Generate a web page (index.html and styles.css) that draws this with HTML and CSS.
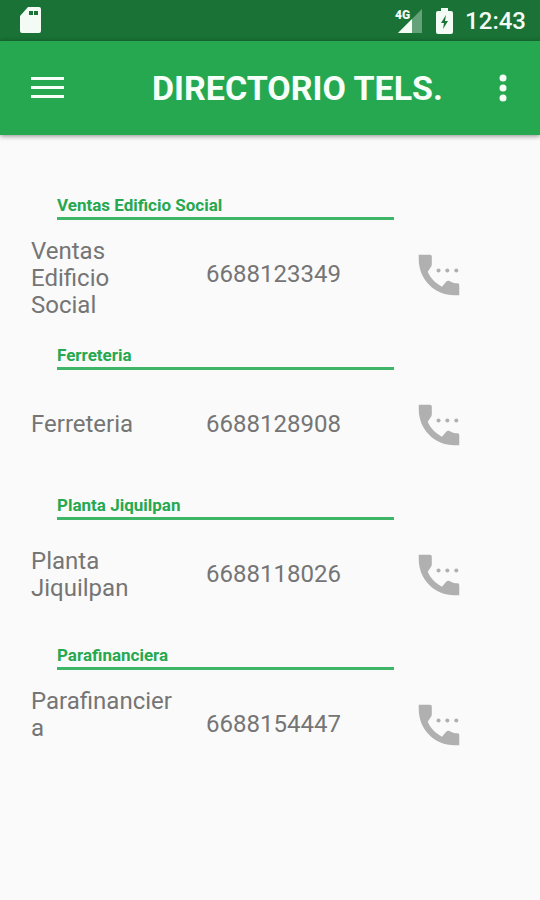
FILE: index.html
```html
<!DOCTYPE html>
<html lang="es">
<head>
<meta charset="utf-8">
<meta name="viewport" content="width=device-width, initial-scale=1">
<title>Directorio Tels.</title>
<link rel="stylesheet" href="styles.css">
</head>
<body>
<svg class="sprite" aria-hidden="true">
  <symbol id="phone" viewBox="0 0 24 24">
    <path d="M3 3h5q.8 0 .8.8v3.400q0 .8-.5 1.400L7 10.600c1.300 2.900 3.500 5.200 6.300 6.600l1.800-2.100q.5-.6 1.300-.5l1.600.7q1.200.4 2.300.4.700 0 .7.700V21h-2C10 21 3 14 3 5z"/>
    <circle cx="11.800" cy="10" r=".9"/><circle cx="15.700" cy="10" r=".9"/><circle cx="19.700" cy="10" r=".9"/>
  </symbol>
</svg>
<div class="status">
  <svg class="sd" viewBox="0 0 22 27" aria-hidden="true"><path fill-rule="evenodd" d="M8 0h11a2 2 0 0 1 2 2v22a2 2 0 0 1-2 2H2a2 2 0 0 1-2-2V9zM9 4v4h4V4zM14 4v4h4V4z"/></svg>
  <div class="signal">
    <span class="network">4G</span>
    <svg class="bars" viewBox="0 0 24 24" aria-hidden="true"><path d="M0 24 24 0v24z" opacity=".35"/><path d="M0 24 14 10v14z"/></svg>
  </div>
  <svg class="battery" viewBox="0 0 17 26" aria-hidden="true"><path fill-rule="evenodd" d="M5 0h7v3h3a2 2 0 0 1 2 2v19a2 2 0 0 1-2 2H2a2 2 0 0 1-2-2V5a2 2 0 0 1 2-2h3zM10 7 5 15h3l-1 6 5-8H9z"/></svg>
  <time class="clock">12:43</time>
</div>
<header class="toolbar">
  <button class="tool" type="button" aria-label="Menú"><svg class="menu" viewBox="0 0 33 24" aria-hidden="true"><path d="M0 1h33v3H0zM0 10h33v3H0zM0 19h33v3H0z"/></svg></button>
  <h1 class="title">DIRECTORIO TELS.</h1>
  <button class="tool" type="button" aria-label="Más opciones"><svg class="dots" viewBox="0 0 8 28" aria-hidden="true"><circle cx="4" cy="4" r="3.500"/><circle cx="4" cy="14" r="3.500"/><circle cx="4" cy="24" r="3.500"/></svg></button>
</header>
<main class="list">
  <section class="entry">
    <h2 class="heading">Ventas Edificio Social</h2>
    <div class="row">
      <p class="name name-top">Ventas Edificio Social</p>
      <p class="number">6688123349</p>
      <button class="call" type="button" aria-label="Llamar a Ventas Edificio Social"><svg class="phone"><use href="#phone"/></svg></button>
    </div>
  </section>
  <section class="entry">
    <h2 class="heading">Ferreteria</h2>
    <div class="row">
      <p class="name">Ferreteria</p>
      <p class="number">6688128908</p>
      <button class="call" type="button" aria-label="Llamar a Ferreteria"><svg class="phone"><use href="#phone"/></svg></button>
    </div>
  </section>
  <section class="entry">
    <h2 class="heading">Planta Jiquilpan</h2>
    <div class="row">
      <p class="name">Planta Jiquilpan</p>
      <p class="number">6688118026</p>
      <button class="call" type="button" aria-label="Llamar a Planta Jiquilpan"><svg class="phone"><use href="#phone"/></svg></button>
    </div>
  </section>
  <section class="entry">
    <h2 class="heading">Parafinanciera</h2>
    <div class="row">
      <p class="name name-top">Parafinanciera</p>
      <p class="number">6688154447</p>
      <button class="call" type="button" aria-label="Llamar a Parafinanciera"><svg class="phone"><use href="#phone"/></svg></button>
    </div>
  </section>
</main>
</body>
</html>
```

FILE: styles.css
```css
* { box-sizing: border-box; }
body {
  margin: 0;
  min-height: 100vh;
  background: #fafafa;
  color: #757575;
  font-family: Roboto, "Liberation Sans", sans-serif;
}
h1, h2, p { margin: 0; }
button { padding: 0; border: 0; background: none; color: inherit; cursor: pointer; }
svg { display: block; fill: currentColor; }
.sprite { display: none; }

.status {
  display: flex;
  align-items: center;
  height: 41px;
  padding: 0 14px 0 20px;
  background: #1a7236;
  color: #f4fbf5;
}
.sd { width: 22px; height: 27px; }
.signal { display: flex; align-items: flex-end; position: relative; margin-left: auto; padding-left: 7px; }
.network { position: absolute; left: 4px; top: 0; font-size: 12px; line-height: 12px; font-weight: 900; }
.bars { width: 24px; height: 24px; }
.battery { width: 17px; height: 26px; margin: 0 12px 0 14px; }
.clock { font-size: 24px; line-height: 40px; font-weight: 500; }

.toolbar {
  display: flex;
  align-items: center;
  height: 94px;
  padding: 0 33px 0 31px;
  background: #26a850;
  color: #f6fff8;
  box-shadow: 0 1px 5px rgba(0, 0, 0, .45);
}
.tool { display: flex; align-items: center; height: 48px; }
.menu { width: 33px; height: 24px; }
.title { flex: 1; padding-left: 88px; font-size: 34px; line-height: 40px; font-weight: 700; white-space: nowrap; }
.dots { width: 8px; height: 28px; }

.list { padding: 59px 74px 24px 31px; }
.heading {
  margin: 0 72px 0 26px;
  padding-bottom: 1px;
  border-bottom: 3px solid #3fb568;
  color: #26a850;
  font-size: 17px;
  line-height: 22px;
  font-weight: 700;
}
.row {
  display: grid;
  grid-template-columns: 175fr 206fr 54px;
  align-items: center;
  height: 109px;
  margin-bottom: 15px;
  font-size: 24px;
  line-height: 27px;
}
.name { padding-right: 30px; overflow-wrap: anywhere; }
.name-top { align-self: start; padding-top: 18px; }
.call { width: 54px; height: 54px; color: #b0b0b0; }
.phone { width: 54px; height: 54px; }
```
